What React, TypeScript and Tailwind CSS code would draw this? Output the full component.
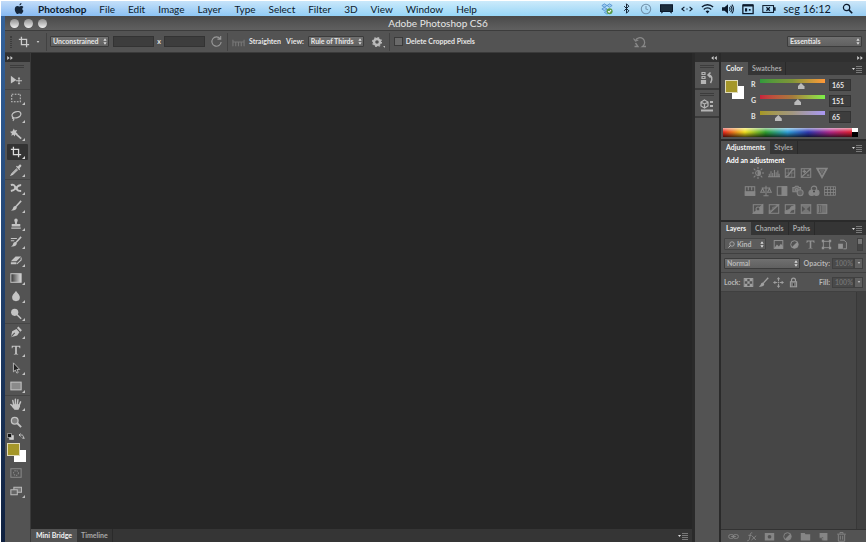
import { useState, type ReactNode } from "react";

interface IconProps {
  children: ReactNode;
  className?: string;
  box?: string;
}

function Icon({ children, className = "h-[14px] w-[14px]", box = "0 0 14 14" }: IconProps) {
  return (
    <svg
      viewBox={box}
      aria-hidden="true"
      className={`shrink-0 ${className}`}
      fill="none"
      stroke="currentColor"
      strokeWidth="1.2"
    >
      {children}
    </svg>
  );
}

const menus = ["File", "Edit", "Image", "Layer", "Type", "Select", "Filter", "3D", "View", "Window", "Help"];

const cropShape = <path d="M4 1v9h9M1 4h9v9" strokeWidth="1.5" />;
const brushShape = (
  <>
    <path d="M13 1 7 7.5" strokeWidth="1.8" />
    <path d="M7 7c-2-.5-3 .8-3.400 2.200C3.200 10.500 2.500 11.500 1 12c3 .8 6.500 0 7-3.200z" fill="currentColor" stroke="none" />
  </>
);
const typeShape = (
  <path d="M2 2h10v3h-.8c-.2-1.300-.8-1.800-2-1.800H8v7.600c0 .6.500.8 1.500.8v.6h-5v-.6c1 0 1.500-.2 1.500-.8V3.200H4.800c-1.200 0-1.800.5-2 1.800H2z" fill="currentColor" stroke="none" />
);

interface Tool {
  name: string;
  shape: ReactNode;
  flyout?: boolean;
  divider?: boolean;
}

const tools: Tool[] = [
  {
    name: "Move",
    shape: (
      <>
        <path d="M1 2v9l6.500-4z" fill="currentColor" stroke="none" />
        <path d="M10.500 4.500v7M7 8h7" />
        <path d="m9 5.500 1.500-2 1.500 2zM9 10.500l1.500 2 1.500-2z" fill="currentColor" stroke="none" />
      </>
    ),
  },
  {
    name: "Marquee",
    flyout: true,
    divider: true,
    shape: <rect x="2" y="2.500" width="10" height="9" strokeDasharray="2 1.500" />,
  },
  {
    name: "Lasso",
    flyout: true,
    shape: (
      <>
        <ellipse cx="7.500" cy="5.500" rx="5.300" ry="3.500" transform="rotate(-18 7.500 5.500)" strokeWidth="1.500" />
        <path d="M3.500 8c-1.500 1-.5 2.500.8 2 .8 1-.3 2-1 2.500" />
      </>
    ),
  },
  {
    name: "Magic Wand",
    flyout: true,
    shape: (
      <>
        <path d="m6 6 7 6.500" strokeWidth="2" />
        <path d="m4.500.5 1 2.500 2.800-.8L7 5l2 2-2.800.3-.7 2.700L4 7.800 1.500 9l.7-2.700L0 4.500l2.800-.6z" fill="currentColor" stroke="none" />
      </>
    ),
  },
  { name: "Crop", flyout: true, shape: cropShape },
  {
    name: "Eyedropper",
    flyout: true,
    shape: (
      <>
        <path d="m8 5.500-6 6-.8 1.500L3 12.300l6-5.800" />
        <path d="m7 3 1-1 1.200 1L11 1c1.500-1 2.800.5 2 2l-2 2 .8 1-1 1.200z" fill="currentColor" stroke="none" />
      </>
    ),
  },
  {
    name: "Healing Brush",
    flyout: true,
    divider: true,
    shape: (
      <>
        <path d="M1 3.500c3-1 4 0 6 3.500s3 3.500 6 3.500M1 10.500c3-.5 4-1 6-3.500s3-3.500 6-3.500" strokeWidth="2.200" />
        <path d="M5 7h4" strokeWidth="3" />
      </>
    ),
  },
  { name: "Brush", flyout: true, shape: brushShape },
  {
    name: "Clone Stamp",
    flyout: true,
    shape: (
      <path d="M5 2.500a2 2 0 0 1 4 0c0 1.500-1 2-1 4.500h4v3H2V7h4c0-2.500-1-3-1-4.500zM1.500 11h11v1.500h-11z" fill="currentColor" stroke="none" />
    ),
  },
  {
    name: "History Brush",
    flyout: true,
    shape: (
      <>
        {brushShape}
        <path d="M1 3h7M1 5.500h4" />
      </>
    ),
  },
  {
    name: "Eraser",
    flyout: true,
    shape: (
      <>
        <path d="M1 8.500 6.500 3H13L7.500 8.500zM1 9.500V12h6.500V9.500" fill="currentColor" stroke="none" />
        <path d="m8 11.500 5-4.500V4" />
      </>
    ),
  },
  {
    name: "Gradient",
    flyout: true,
    shape: (
      <>
        <defs>
          <linearGradient id="toolGradient">
            <stop stopColor="#333" />
            <stop offset="1" stopColor="#ddd" />
          </linearGradient>
        </defs>
        <rect x="1" y="2" width="12" height="10" fill="url(#toolGradient)" />
      </>
    ),
  },
  {
    name: "Blur",
    flyout: true,
    shape: <path d="M7 1c1 2.500 4.500 4.500 4.500 7.600a4.500 4.500 0 0 1-9 0C2.500 5.500 6 3.500 7 1z" fill="currentColor" stroke="none" />,
  },
  {
    name: "Dodge",
    flyout: true,
    shape: (
      <>
        <circle cx="5.500" cy="5" r="4.200" fill="currentColor" stroke="none" />
        <path d="m8 7.500 5 5" strokeWidth="1.800" />
      </>
    ),
  },
  {
    name: "Pen",
    flyout: true,
    divider: true,
    shape: (
      <>
        <path d="m1 13 1.500-7 5-2.500 3.500 3.700L8.300 11z" fill="currentColor" stroke="none" />
        <path d="m9 1.500 4 4.300" strokeWidth="2.400" />
        <path d="m1.500 12.500 4-4.500" stroke="#535353" />
      </>
    ),
  },
  { name: "Type", flyout: true, shape: typeShape },
  {
    name: "Path Selection",
    flyout: true,
    shape: <path d="M4 1v10.500l2.300-2.200L8 13l1.600-.8L8 8.700h3.300z" fill="#222" strokeWidth="1" />,
  },
  {
    name: "Rectangle",
    flyout: true,
    shape: <rect x="1" y="2.500" width="12" height="9" fill="#8a8a8a" />,
  },
  {
    name: "Hand",
    flyout: true,
    divider: true,
    shape: (
      <>
        <path d="M3.500 8h7.500v2l-1.500 3h-4L3 10z" fill="currentColor" />
        <path d="M4.500 8.500 3.300 3M6.300 8V1.500M8.500 8l.7-6M10.500 9l1.800-4.500M4 10.500 1 7.500" strokeWidth="1.700" strokeLinecap="round" />
      </>
    ),
  },
  {
    name: "Zoom",
    shape: (
      <>
        <circle cx="5.500" cy="5.500" r="3.900" fill="#808080" strokeWidth="1.500" />
        <path d="m8.500 8.500 4.500 4.500" strokeWidth="2.200" />
      </>
    ),
  },
];

const frame = <rect x="1.500" y="2" width="11" height="10" />;

const adjustmentRows: { name: string; shape: ReactNode }[][] = [
  [
    {
      name: "Brightness/Contrast",
      shape: (
        <>
          <circle cx="7" cy="7" r="2.800" />
          <path d="M7 4.200v5.600a2.800 2.800 0 0 0 0-5.600z" fill="currentColor" />
          <path d="M7 0v2.500M7 11.500V14M0 7h2.500M11.500 7H14M2 2l2 2M10 10l2 2M2 12l2-2M10 4l2-2" />
        </>
      ),
    },
    { name: "Levels", shape: <path d="M0 11.500h14M1.500 11V8M3.500 11V5M5.500 11V7M7.500 11V3.500M9.500 11V6M11.500 11V4M13 11V8" /> },
    { name: "Curves", shape: <>{frame}<path d="M5 2v10M9 2v10M1.500 7h11" strokeWidth=".6" /><path d="M1.500 11.500C8 11 6 3 12.500 2.500" strokeWidth="1.500" /></> },
    { name: "Exposure", shape: <>{frame}<path d="M1.500 12 12.500 2M3 5h4M5 3v4M8 9.500h3" strokeWidth="1.500" /></> },
    { name: "Vibrance", shape: <><path d="M1.500 2h11L7 12z" strokeWidth="2" /><path d="M4 3h6L7 9z" fill="#6c6c6c" stroke="none" /></> },
  ],
  [
    { name: "Hue/Saturation", shape: <>{frame}<path d="M1.500 8h11v4h-11zM5 2v4M9 2v4" fill="currentColor" /></> },
    { name: "Color Balance", shape: <path d="M7 1v11M4 12.500h6M2 3.500h10M3 4 .8 8.500h4.400zM11 4 8.800 8.500h4.400z" /> },
    { name: "Black & White", shape: <>{frame}<path d="M7 2h5.500v10H7z" fill="currentColor" /></> },
    {
      name: "Photo Filter",
      shape: (
        <>
          <path d="M1 3h2l1-1.500h3L8 3h2v5H1z" fill="#6c6c6c" />
          <circle cx="5.500" cy="5.500" r="1.500" />
          <circle cx="9.500" cy="9" r="3.500" fill="#666" />
        </>
      ),
    },
    {
      name: "Channel Mixer",
      shape: (
        <>
          <circle cx="7" cy="4.500" r="3.200" />
          <circle cx="4.300" cy="9" r="3.200" fill="currentColor" />
          <circle cx="9.700" cy="9" r="3.200" fill="currentColor" />
          <circle cx="7" cy="7.500" r="1.200" fill="#444" stroke="none" />
        </>
      ),
    },
    { name: "Color Lookup", shape: <path d="M.5 2h13v10H.5zM4 2v10M7.500 2v10M11 2v10M.5 5.300h13M.5 8.700h13" strokeWidth="1" /> },
  ],
  [
    { name: "Invert", shape: <>{frame}<path d="M12.500 2v10h-11z" fill="currentColor" /><circle cx="7" cy="7" r="2.300" fill="#535353" /></> },
    { name: "Posterize", shape: <>{frame}<path d="M1.500 12V9l4-1V5l4-1V2h3z" fill="currentColor" opacity=".6" /><path d="M2 11.500 12 2.500" /></> },
    { name: "Threshold", shape: <>{frame}<path d="M1.500 12V9.500l5-2 2-3 4-1.500V7L8 8.500 6 12z" fill="currentColor" /></> },
    { name: "Selective Color", shape: <>{frame}<path d="M2 2.500 7 7l5-4.500zM2 11.500 7 7l5 4.500z" fill="currentColor" opacity=".7" /></> },
    { name: "Gradient Map", shape: <>{frame}<path d="M3 3v8M5 3v8" strokeWidth="1" /><path d="M7 2h5.500v10H7z" fill="currentColor" opacity=".6" /></> },
  ],
];

const maskCircle = (
  <>
    <circle cx="7" cy="7" r="4.800" />
    <path d="M10.500 3.500a5 5 0 0 1-7 7z" fill="currentColor" stroke="none" />
  </>
);

const layerFilters = [
  { name: "Filter for pixel layers", shape: <>{frame}<path d="m2 11 3-4 2.500 2.500L10 6l2.500 3v3h-11z" fill="currentColor" stroke="none" /></> },
  { name: "Filter for adjustment layers", shape: maskCircle },
  { name: "Filter for type layers", shape: typeShape },
  { name: "Filter for shape layers", shape: <><path d="M3 3h8v8H3z" /><path d="M1 1h3v3H1zM10 1h3v3h-3zM1 10h3v3H1zM10 10h3v3h-3z" fill="currentColor" stroke="none" /></> },
  { name: "Filter for smart objects", shape: <><path d="M4 1.500h5l3 3v8H8" /><path d="M1.500 6h6v6.500h-6z" fill="currentColor" stroke="none" /></> },
];

const lockButtons = [
  { name: "Lock transparent pixels", shape: <>{frame}<path d="M2 2h3.500v3.500H2zM8.500 2H12v3.500H8.500zM5.500 5.500h3v3h-3zM2 8.500h3.500V12H2zM8.500 8.500H12V12H8.500z" fill="currentColor" stroke="none" /></> },
  { name: "Lock image pixels", shape: brushShape },
  { name: "Lock position", shape: <><path d="M7 2v10M2 7h10" strokeDasharray="3.500 1 1 1" /><path d="M7 0l2.200 3H4.800zM7 14l2.200-3H4.800zM0 7l3-2.200v4.400zM14 7l-3-2.200v4.400z" fill="currentColor" stroke="none" /></> },
  { name: "Lock all", shape: <><path d="M4.500 6V4a2.500 2.500 0 0 1 5 0v2" strokeWidth="1.500" /><rect x="3" y="6" width="8" height="6.500" fill="#777" /><path d="M7 8v3" stroke="#333" /></> },
];

const layerActions = [
  { name: "Link layers", shape: <><rect x=".8" y="4.500" width="6.500" height="5" rx="2.500" /><rect x="6.700" y="4.500" width="6.500" height="5" rx="2.500" /><path d="M4 7h6" /></> },
  { name: "Layer style", shape: <><path d="M8 2.500C5.500 1.500 5.500 4 5 7s-1 6-3.500 5.500M3 5.500h4" /><path d="m7.500 6 5 5.500M13 6l-6 5.500" /></> },
  { name: "Add mask", shape: <path d="M1 2.500h12v9.500H1zM7 5a2.300 2.300 0 1 0 .01 0z" fill="currentColor" fillRule="evenodd" stroke="none" /> },
  { name: "New adjustment layer", shape: maskCircle },
  { name: "New group", shape: <path d="M1 2.500h5l1 1.500h6v8H1z" fill="currentColor" stroke="none" /> },
  { name: "New layer", shape: <><path d="M2 2.500h10V12H6.500V7.500H2z" fill="currentColor" stroke="none" /><path d="M2 8.500h3.500V12" /></> },
  { name: "Delete layer", shape: <path d="M1.500 4h11M5 3.500V2h4v1.500M3 4.500V13h8V4.500M5.500 6v5M8.500 6v5" /> },
];

function UpDown() {
  return (
    <Icon box="0 0 5 8" className="pointer-events-none absolute right-[2px] h-[7px] w-[4px] text-[#ddd]">
      <path d="M2.500 0 4.500 3h-4zM2.500 8l2-3h-4z" fill="currentColor" stroke="none" />
    </Icon>
  );
}

function Dropdown({ label, value, className }: { label: string; value: string; className: string }) {
  return (
    <span className={`relative flex h-[11px] shrink-0 items-center ${className}`}>
      <select
        aria-label={label}
        className="h-full w-full appearance-none rounded-[1px] border border-[#3c3c3c] bg-linear-to-b from-[#707070] to-[#606060] pl-[2px] leading-none"
      >
        <option>{value}</option>
      </select>
      <UpDown />
    </span>
  );
}

function PanelMenu({ name }: { name: string }) {
  return (
    <button aria-label={name} className="ml-auto flex items-center pr-[4px] text-[#8c8c8c]">
      <Icon box="0 0 10 8" className="h-[8px] w-[10px]">
        <path d="M0 3h3L1.500 5z" fill="#ddd" stroke="none" />
        <path d="M4 1.500h6M4 3.500h6M4 5.500h6M4 7.500h6" strokeWidth=".8" />
      </Icon>
    </button>
  );
}

function Tabs({ items, menu }: { items: string[]; menu: string }) {
  return (
    <div className="flex h-[13px] shrink-0 bg-[#353535]">
      {items.map((item, i) => (
        <button
          key={item}
          className={
            i === 0
              ? "bg-[#535353] px-[5px] font-bold text-[#f2f2f2]"
              : "border-r border-[#2a2a2a] px-[4px] font-bold text-[#a8a8a8]"
          }
        >
          {item}
        </button>
      ))}
      <PanelMenu name={menu} />
    </div>
  );
}

function DoubleArrow({ left }: { left?: boolean }) {
  return (
    <Icon box="0 0 7 5" className="h-[4px] w-[6px] text-[#ccc]">
      <path d={left ? "M3 0v5L0 2.500zM7 0v5L4 2.500z" : "M0 0v5l3-2.500zM4 0v5l3-2.500z"} fill="currentColor" stroke="none" />
    </Icon>
  );
}

function Divider() {
  return <span className="h-[18px] w-px shrink-0 bg-[#424242]" />;
}

function Gripper() {
  return <span className="h-[3px] w-[14px] border-y border-[#3c3c3c]" />;
}

function MenuBar() {
  return (
    <header className="flex h-[15px] shrink-0 items-center bg-[linear-gradient(to_bottom,#ffffff80,transparent),linear-gradient(to_right,#86b8f2,#98d8f8_50%,#98cdf2)] px-[13px] text-[10px] leading-none text-[#0c1a2c]">
      <button aria-label="Apple menu" className="mr-[13px]">
        <Icon className="h-[11px] w-[11px]">
          <path d="M9.500 0c.1 1.600-1.100 3-2.600 3C6.800 1.500 8 .2 9.500 0zM12 9.800C11.300 11.800 10 14 8.800 14c-.8 0-1-.5-2-.5s-1.300.5-2 .5C3.200 14 1 10.700 1 7.800c0-2.600 1.600-4 3.300-4 1 0 1.900.7 2.500.7.600 0 1.600-.8 2.900-.7 1 .1 1.800.5 2.300 1.300-2 1.200-1.700 3.900 0 4.700z" fill="#16263a" stroke="none" />
        </Icon>
      </button>
      <nav className="flex items-center gap-[13px]">
        <button className="font-bold">Photoshop</button>
        {menus.map((menu) => (
          <button key={menu}>{menu}</button>
        ))}
      </nav>
      <div className="ml-auto flex items-center gap-[8px]">
        <Icon className="h-[12px] w-[12px]">
          <path d="m4 1 3 2-3 2-3-2zM10 1l3 2-3 2-3-2zM4 5l3 2-3 2-3-2zM7 9l3 2-3 2-3-2z" fill="#9cc8f0" stroke="#3f85c8" strokeWidth=".8" />
          <circle cx="10" cy="9.500" r="3.500" fill="#5a9a48" stroke="none" />
          <path d="m8.300 9.500 1.200 1.300 2.200-2.500" stroke="#fff" />
        </Icon>
        <Icon className="h-[11px] w-[11px]">
          <path d="m4 4 6 6-3 3V1l3 3-6 6" />
        </Icon>
        <Icon className="h-[12px] w-[12px] text-[#7192ab]">
          <circle cx="7" cy="7" r="5.500" />
          <path d="M7 3.500V7l2.500 1" />
        </Icon>
        <Icon className="h-[12px] w-[13px]">
          <path d="M0 2h14v8H0z" fill="#1b2d3c" />
          <path d="m1 12 1.500-2M13 12l-1.500-2" />
        </Icon>
        <Icon className="h-[12px] w-[12px]">
          <path d="M4 4.500 1 7l3 2.500M10 4.500 13 7l-3 2.500" strokeWidth="1.400" />
          <path d="M6.300 7h1.400" />
        </Icon>
        <Icon className="h-[13px] w-[13px]">
          <path d="M1 5.500a8.500 8.500 0 0 1 12 0M3 8a5.700 5.700 0 0 1 8 0" strokeWidth="1.500" />
          <path d="M5 10a3 3 0 0 1 4 0l-2 2.300z" fill="currentColor" stroke="none" />
        </Icon>
        <Icon className="h-[12px] w-[12px]">
          <path d="M0 5h3l4-3.500v11L3 9H0z" fill="currentColor" stroke="none" />
          <path d="M8.500 5a3 3 0 0 1 0 4M10 3.300a5.500 5.500 0 0 1 0 7.400M11.500 1.800a8 8 0 0 1 0 10.400" />
        </Icon>
        <Icon className="h-[12px] w-[12px]">
          <path d="M1 2.500h12v10H1z" strokeWidth="1.500" />
          <path d="M1 1.500h12V4H1zM3.500 6H6v4H3.500z" fill="currentColor" stroke="none" />
          <path d="M8 8h2" strokeWidth="2" />
        </Icon>
        <Icon box="0 0 16 14" className="h-[12px] w-[14px]">
          <rect x=".8" y="3" width="12.500" height="8" />
          <path d="M14.800 5v4" strokeWidth="1.800" />
          <path d="m5 5 4 4M9 5 5 9" strokeWidth="1.500" />
        </Icon>
        <span className="text-[11px]">seg 16:12</span>
        <button aria-label="Spotlight" className="ml-[3px]">
          <Icon className="h-[11px] w-[11px]">
            <circle cx="5.800" cy="5.800" r="4" strokeWidth="1.600" />
            <path d="m8.800 8.800 4.200 4.200" strokeWidth="2" />
          </Icon>
        </button>
      </div>
    </header>
  );
}

function OptionsBar() {
  return (
    <div className="flex h-[22px] shrink-0 items-center border-b border-[#3a3a3a] bg-[#535353] pl-[5px] pr-[4px] text-[7px] font-bold leading-none">
      <span className="border-x border-dotted border-[#3c3c3c] py-[6px]" />
      <button aria-label="Crop tool presets" className="ml-[6px] flex items-center gap-[6px] text-[#ccc]">
        <Icon className="h-[12px] w-[12px]">{cropShape}</Icon>
        <Icon box="0 0 4 3" className="h-[2px] w-[4px]">
          <path d="M0 0h4L2 3z" fill="currentColor" stroke="none" />
        </Icon>
      </button>
      <span className="ml-[6px] flex">
        <Divider />
      </span>
      <div className="ml-[3px] flex items-center">
        <Dropdown label="Aspect ratio" value="Unconstrained" className="w-[59px]" />
        <input aria-label="Width" className="ml-[4px] h-[11px] w-[41px] border border-[#333] bg-[#3d3d3d]" />
        <span className="w-[10px] text-center">x</span>
        <input aria-label="Height" className="h-[11px] w-[41px] border border-[#333] bg-[#3d3d3d]" />
      </div>
      <button aria-label="Rotate crop box" className="ml-[5px] mr-[4px] text-[#999]">
        <Icon className="h-[13px] w-[13px]">
          <path d="M11 4a5 5 0 1 0 1 3.500M11.500 1v3.500H8" />
        </Icon>
      </button>
      <Divider />
      <button className="ml-[4px] flex items-center gap-[4px]">
        <Icon className="h-[13px] w-[13px] text-[#777]">
          <path d="M1 5v7M1 7.500h12M4 8v4M7 8v4M10 8v4M13 5v7" />
        </Icon>
        Straighten
      </button>
      <label className="ml-[5px] flex items-center gap-[4px]">
        View:
        <Dropdown label="View" value="Rule of Thirds" className="w-[56px]" />
      </label>
      <button aria-label="More crop options" className="ml-[7px] mr-[4px] flex items-end text-[#bbb]">
        <Icon className="h-[12px] w-[12px]">
          <circle cx="7" cy="7" r="3.500" strokeWidth="2.800" />
          <circle cx="7" cy="7" r="5.300" strokeDasharray="2 2.160" />
        </Icon>
        <Icon box="0 0 3 3" className="h-[2px] w-[2px]">
          <path d="M0 0h3v3z" fill="currentColor" stroke="none" />
        </Icon>
      </button>
      <Divider />
      <label className="ml-[4px] flex items-center gap-[3px]">
        <input type="checkbox" className="h-[9px] w-[9px] appearance-none border border-[#3a3a3a] bg-[#6a6a6a]" />
        Delete Cropped Pixels
      </label>
      <div className="flex flex-1 items-center justify-end">
        <button aria-label="Reset crop" className="mr-[140px] text-[#888]">
          <Icon>
            <path d="M2.500 5.500a4.800 4.800 0 1 1 7 6H13M1.500 11.500H5L2.500 8" strokeWidth="1.300" />
            <path d="M.5 3.500 2.500 6l2.800-1" />
          </Icon>
        </button>
        <Dropdown label="Workspace" value="Essentials" className="w-[75px]" />
      </div>
    </div>
  );
}

function Toolbar() {
  const [active, setActive] = useState("Crop");

  return (
    <aside className="flex w-[26px] shrink-0 flex-col border-r border-[#3a3a3a] bg-[#535353]">
      <div className="flex h-[9px] shrink-0 items-center bg-[#303030] pl-[2px]">
        <DoubleArrow />
      </div>
      <div className="flex h-[9px] items-center justify-center pr-[2px]">
        <Gripper />
      </div>
      {tools.map((tool) => (
        <div
          key={tool.name}
          className={tool.divider ? "h-[18px] border-t border-[#454545] px-[2px]" : "h-[18px] px-[2px] pt-px"}
        >
          <button
            aria-label={tool.name}
            onClick={() => setActive(tool.name)}
            className={
              tool.name === active
                ? "flex h-[16px] w-full items-center rounded-[1px] bg-[#333] pl-[3px] text-[#ddd]"
                : "flex h-[16px] w-full items-center pl-[3px] text-[#c4c4c4]"
            }
          >
            <Icon className="h-[12px] w-[12px]">{tool.shape}</Icon>
            {tool.flyout && (
              <Icon box="0 0 3 3" className="mb-px h-[3px] w-[3px] self-end">
                <path d="M3 0v3H0z" fill="currentColor" stroke="none" />
              </Icon>
            )}
          </button>
        </div>
      ))}
      <div className="flex h-[10px] items-center justify-between pl-[2px] pr-[5px] text-[#ccc]">
        <button aria-label="Default colors">
          <Icon className="h-[7px] w-[7px]">
            <path d="M5 5h8v8H5z" fill="currentColor" />
            <path d="M1 1h8v8H1z" fill="#111" />
          </Icon>
        </button>
        <button aria-label="Swap colors">
          <Icon className="h-[7px] w-[7px]">
            <path d="M2 4h5c3 0 4 2 4 6M5 1 2 4l3 3M8 9l3 3 3-3" strokeWidth="1.800" />
          </Icon>
        </button>
      </div>
      <div className="relative mt-px h-[22px]">
        <button aria-label="Background color" className="absolute left-[9px] top-[8px] h-[12px] w-[12px] bg-white" />
        <button aria-label="Foreground color" className="absolute left-[2px] top-px h-[13px] w-[13px] border border-[#ded9b8] bg-[#a59729]" />
      </div>
      <button aria-label="Quick mask" className="flex h-[18px] items-center pl-[5px] text-[#888]">
        <Icon className="h-[12px] w-[12px]">
          <rect x="1" y="2" width="12" height="10" />
          <circle cx="7" cy="7" r="2.800" strokeDasharray="1.500 1" />
        </Icon>
      </button>
      <button aria-label="Screen mode" className="flex h-[18px] items-center pl-[5px] text-[#bbb]">
        <Icon className="h-[12px] w-[12px]">
          <path d="M4.500 2.500h9v6h-9z" fill="#777" />
          <path d="M1 5.500h7.500v6H1z" fill="#666" />
        </Icon>
        <Icon box="0 0 3 3" className="mb-[2px] h-[3px] w-[3px] self-end">
          <path d="M3 0v3H0z" fill="currentColor" stroke="none" />
        </Icon>
      </button>
    </aside>
  );
}

const sliderClass =
  "block h-[4px] min-w-0 flex-1 appearance-none [&::-webkit-slider-thumb]:mt-[4px] [&::-webkit-slider-thumb]:h-[6px] [&::-webkit-slider-thumb]:w-[7px] [&::-webkit-slider-thumb]:appearance-none [&::-webkit-slider-thumb]:bg-[#bbb] [&::-webkit-slider-thumb]:[clip-path:polygon(50%_0,100%_60%,100%_100%,0_100%,0_60%)] [&::-webkit-slider-runnable-track]:h-[4px]";

const channels = [
  { name: "R", value: 165, track: "bg-linear-to-r from-[#2f9a3c] via-[#7f9438] to-[#ff9838]" },
  { name: "G", value: 151, track: "bg-linear-to-r from-[#c8203c] via-[#a67a3c] to-[#78f048]" },
  { name: "B", value: 65, track: "bg-linear-to-r from-[#a59720] via-[#a29780] to-[#ab98f5]" },
];

function ColorPanel() {
  const [values, setValues] = useState(channels.map((channel) => channel.value));

  function update(index: number, value: number) {
    setValues(values.map((old, i) => (i === index ? value : old)));
  }

  return (
    <section className="flex flex-col bg-[#535353] pb-[2px]">
      <Tabs items={["Color", "Swatches"]} menu="Color panel menu" />
      <div className="flex h-[53px] pl-[4px] pr-[15px] pt-[4px]">
        <div className="relative w-[26px] shrink-0">
          <span className="absolute left-[7px] top-[7px] h-[13px] w-[12px] bg-white" />
          <span className="absolute left-0 top-px h-[13px] w-[13px] border border-[#ded9b8] bg-[#a59729]" />
        </div>
        <div className="flex min-w-0 flex-1 flex-col gap-[4px] text-[7px] font-bold leading-none">
          {channels.map((channel, i) => (
            <div key={channel.name} className="flex h-[12px]">
              <label htmlFor={channel.name} className="w-[9px] shrink-0 pt-[2px]">
                {channel.name}
              </label>
              <input
                id={channel.name}
                type="range"
                min="0"
                max="255"
                value={values[i]}
                onChange={(e) => update(i, Number(e.target.value))}
                className={`${sliderClass} ${channel.track}`}
              />
              <input
                aria-label={`${channel.name} value`}
                value={values[i]}
                onChange={(e) => update(i, Number(e.target.value))}
                className="ml-[4px] h-[12px] w-[22px] shrink-0 border border-[#333] bg-[#3d3d3d] pl-[2px]"
              />
            </div>
          ))}
        </div>
      </div>
      <div className="ml-[2px] mr-[8px] flex h-[9px]">
        <div className="flex-1 bg-[linear-gradient(to_bottom,#ffffff99,transparent_45%,#000000b0),linear-gradient(to_right,#e8241c,#f0e020_17%,#30a030_33%,#30a0d8_50%,#3038b0_66%,#b02888_83%,#e02030)]" />
        <div className="w-[6px] bg-linear-to-b from-white from-50% to-black to-50%" />
      </div>
    </section>
  );
}

function AdjustmentsPanel() {
  return (
    <section className="flex flex-col bg-[#535353] pb-[5px]">
      <Tabs items={["Adjustments", "Styles"]} menu="Adjustments panel menu" />
      <h2 className="px-[5px] pt-[2px] text-[7px] font-bold leading-[8px] text-white">Add an adjustment</h2>
      <div className="flex flex-col items-center gap-[6px] pr-[7px] pt-[3px] text-[#868686]">
        {adjustmentRows.map((row, i) => (
          <div key={i} className="flex gap-[4px]">
            {row.map((item) => (
              <button key={item.name} aria-label={item.name}>
                <Icon className="h-[12px] w-[12px]">{item.shape}</Icon>
              </button>
            ))}
          </div>
        ))}
      </div>
    </section>
  );
}

function Percent({ label }: { label: string }) {
  return (
    <div className="ml-auto flex items-center">
      <label className="flex items-center gap-[2px]">
        {label}
        <input defaultValue="100%" className="h-[11px] w-[22px] border border-[#404040] bg-[#4a4a4a] pl-[2px] text-[#707070]" />
      </label>
      <button aria-label={`${label} slider`} className="flex h-[11px] w-[9px] items-center justify-center border border-[#404040] bg-[#606060]">
        <Icon box="0 0 4 3" className="h-[2px] w-[4px]">
          <path d="M0 0h4L2 3z" fill="currentColor" stroke="none" />
        </Icon>
      </button>
    </div>
  );
}

function LayersPanel() {
  return (
    <section className="flex min-h-0 flex-1 flex-col bg-[#535353]">
      <Tabs items={["Layers", "Channels", "Paths"]} menu="Layers panel menu" />
      <div className="flex flex-col text-[7px] font-bold leading-none text-[#b8b8b8]">
        <div className="flex h-[18px] items-center px-[3px]">
          <span className="relative flex h-[12px] w-[42px] items-center">
            <select aria-label="Filter type" className="h-full w-full appearance-none rounded-[1px] border border-[#454545] bg-[#5c5c5c] pl-[12px]">
              <option>Kind</option>
            </select>
            <Icon className="pointer-events-none absolute left-[4px] h-[7px] w-[7px]">
              <circle cx="8" cy="6" r="4.500" strokeWidth="1.500" />
              <path d="m5 9-4 4" strokeWidth="2" />
            </Icon>
            <UpDown />
          </span>
          <div className="ml-[7px] flex gap-[5px] text-[#929292]">
            {layerFilters.map((filter) => (
              <button key={filter.name} aria-label={filter.name}>
                <Icon className="h-[11px] w-[11px]">{filter.shape}</Icon>
              </button>
            ))}
          </div>
          <button aria-label="Toggle filtering" className="ml-auto h-[13px] w-[6px] border border-[#404040] bg-linear-to-b from-[#777] from-40% to-[#454545] to-50%" />
        </div>
        <div className="flex h-[20px] items-center border-y border-[#404040] px-[3px]">
          <Dropdown label="Blend mode" value="Normal" className="w-[76px]" />
          <Percent label="Opacity:" />
        </div>
        <div className="flex h-[19px] items-center border-b border-[#404040] px-[3px]">
          <span>Lock:</span>
          <div className="ml-[3px] flex gap-[4px] text-[#a0a0a0]">
            {lockButtons.map((lock) => (
              <button key={lock.name} aria-label={lock.name}>
                <Icon className="h-[11px] w-[11px]">{lock.shape}</Icon>
              </button>
            ))}
          </div>
          <Percent label="Fill:" />
        </div>
      </div>
      <div className="flex flex-1 justify-end bg-[#464646]">
        <div className="w-[10px] border-l border-[#383838] bg-[#414141]" />
      </div>
      <footer className="flex h-[13px] shrink-0 items-center gap-[7px] border-t border-[#333] pl-[7px] text-[#858585]">
        {layerActions.map((action) => (
          <button key={action.name} aria-label={action.name}>
            <Icon className="h-[11px] w-[11px]">{action.shape}</Icon>
          </button>
        ))}
      </footer>
    </section>
  );
}

function CollapsedDock() {
  return (
    <aside className="ml-[3px] mr-[2px] flex w-[24px] shrink-0 flex-col bg-[#535353] text-[#b5b5b5]">
      <div className="flex h-[9px] shrink-0 items-center justify-end bg-[#303030] pr-[2px]">
        <DoubleArrow left />
      </div>
      <button aria-label="History" className="flex h-[28px] flex-col items-center gap-[3px] border-b-2 border-[#3a3a3a] pt-[3px]">
        <Gripper />
        <Icon>
          <path d="M2 1.500h3v2H2zM2 5.500h3v2H2z" />
          <path d="M1.500 9.500h4v3h-4z" fill="currentColor" />
          <path d="M8 4c4 0 5 4 2.500 8M10.500 1.500 8 4l2.500 2.500" strokeWidth="1.500" />
        </Icon>
      </button>
      <button aria-label="Properties" className="flex h-[28px] flex-col items-center gap-[3px] border-b-2 border-[#3a3a3a] pt-[3px]">
        <Gripper />
        <Icon>
          <path d="m4.500 1 3.500 2v4L4.500 9 1 7V3zM1 3l3.500 2L8 3M4.500 5v4" />
          <path d="M10 2h3v2h-3zM10 6h3v2h-3zM1 10.500h12v2H1z" fill="currentColor" stroke="none" />
        </Icon>
      </button>
    </aside>
  );
}

export default function App() {
  return (
    <div className="flex h-screen flex-col bg-white p-px font-[Lato,'Open_Sans',sans-serif] text-[7px] leading-none text-[#e6e6e6]">
      <MenuBar />
      <div className="flex min-h-0 flex-1 bg-linear-to-b from-[#34639c] to-[#10213f] pl-[4px]">
        <div className="flex min-w-0 flex-1 flex-col bg-[#2a2a2a]">
          <div className="flex h-[15px] shrink-0 items-center border-b border-[#3c3c3c] bg-linear-to-b from-[#4a4a4a] to-[#606060] pl-[5px]">
            <div className="flex flex-1 gap-[5px]">
              {["Close", "Minimize", "Zoom window"].map((name) => (
                <button key={name} aria-label={name} className="h-[9px] w-[9px] rounded-full bg-linear-to-b from-[#8f8f8f] to-[#f0f0f0]" />
              ))}
            </div>
            <h1 className="text-[10px]">Adobe Photoshop CS6</h1>
            <div className="flex-1" />
          </div>
          <OptionsBar />
          <div className="flex min-h-0 flex-1">
            <Toolbar />
            <main className="flex min-w-0 flex-1 flex-col">
              <div className="flex-1 bg-[#262626]" />
              <Tabs items={["Mini Bridge", "Timeline"]} menu="Mini Bridge menu" />
            </main>
            <CollapsedDock />
            <div className="flex w-[145px] shrink-0 flex-col gap-[2px]">
              <div className="-mb-[2px] flex h-[9px] shrink-0 items-center justify-end bg-[#303030] pr-[3px]">
                <DoubleArrow />
              </div>
              <ColorPanel />
              <AdjustmentsPanel />
              <LayersPanel />
            </div>
          </div>
        </div>
      </div>
    </div>
  );
}
